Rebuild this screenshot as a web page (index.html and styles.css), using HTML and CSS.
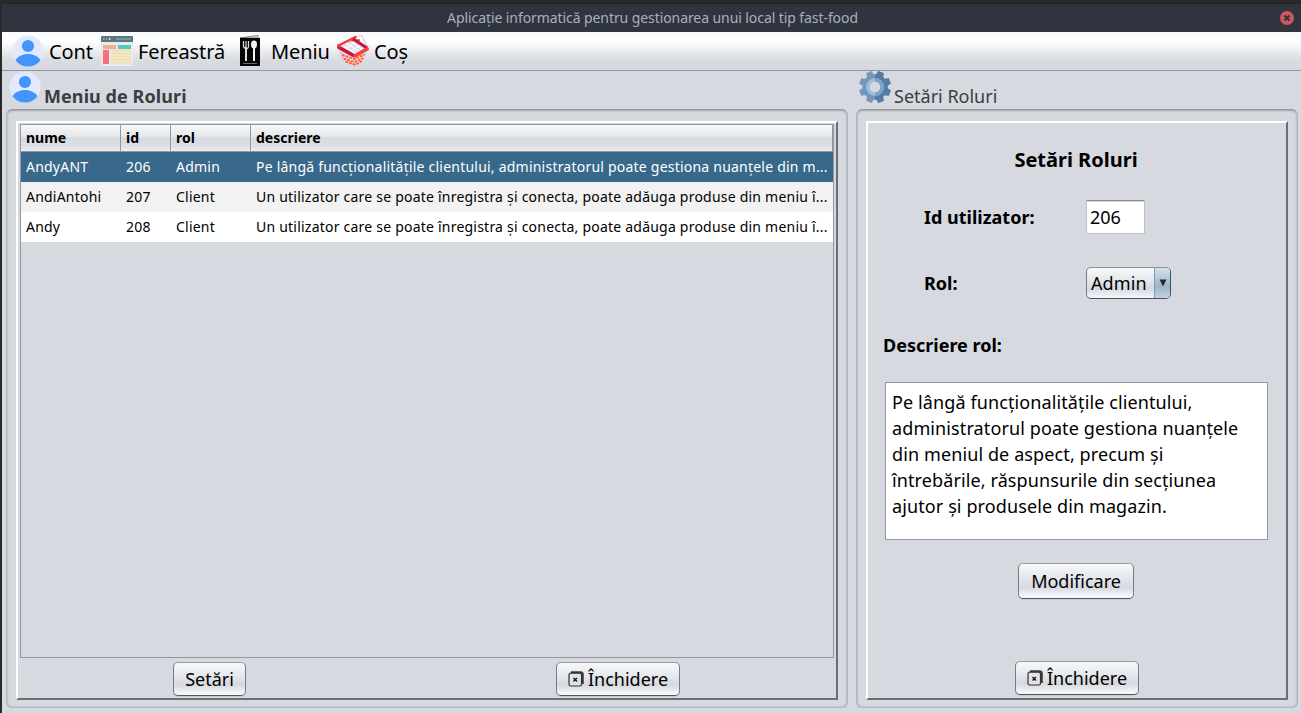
FILE: index.html
```html
<!DOCTYPE html>
<html lang="ro">
<head>
<meta charset="utf-8">
<title>Aplicație informatică pentru gestionarea unui local tip fast-food</title>
<link rel="stylesheet" href="styles.css">
</head>
<body>
<svg class="defs" width="0" height="0" aria-hidden="true">
  <symbol id="user" viewBox="0 0 32 32">
    <circle cx="16" cy="16" r="15.6" fill="#e3eaff"/>
    <circle cx="16" cy="11" r="6.1" fill="#4294ff"/>
    <path d="M3.5 25.2C6 21.300 10.500 19 16 19s10 2.300 12.500 6.200A15.600 15.600 0 0 1 16 31.600 15.600 15.600 0 0 1 3.500 25.200z" fill="#4294ff"/>
  </symbol>
  <symbol id="close" viewBox="0 0 16 16">
    <path d="M3 1.200h9.500q2.300 0 2.300 2.300v9.500" fill="none" stroke="#3c3c3f" stroke-width="2"/>
    <rect x="1" y="2.200" width="12.500" height="12.800" rx="1.800" fill="#e1e3e8" stroke="#303033" stroke-width="1.200"/>
    <path d="M5.500 7l3.500 3.500M9 7l-3.500 3.500" stroke="#111" stroke-width="1.300"/>
  </symbol>
</svg>
<div class="window">
  <header class="titlebar">
    <span class="title">Aplicație informatică pentru gestionarea unui local tip fast-food</span>
    <svg class="win-close" viewBox="0 0 14 14"><circle cx="7" cy="7" r="7" fill="#cc575d"/><path d="M4.500 4.500l5 5M9.500 4.500l-5 5" stroke="#2f343f" stroke-width="1.900"/></svg>
  </header>
  <nav class="menubar">
    <div class="item cont"><svg class="icon"><use href="#user"/></svg><span>Cont</span></div>
    <div class="item fereastra"><svg class="icon" viewBox="0 0 32 32">
      <rect y="1" width="32" height="30" rx="1" fill="#e9ebea"/><path d="M0 7V2q0-1 1-1h30q1 0 1 1v5z" fill="#5c7582"/>
      <path d="M2 3h1.500v2H2z" fill="#4fc9be"/><path d="M5 3h1.500v2H5z" fill="#f06f77"/><path d="M8 3h1.500v2H8z" fill="#f3d27b"/><path d="M15 3h15v2H15z" fill="#7f929c"/>
      <path d="M2 10h13v4H2z" fill="#eeb087"/><path d="M17 10h13v4H17z" fill="#4fcabe"/><path d="M2 15h6v14H2z" fill="#fa6e7c"/>
      <path d="M10 15.500h20M10 18.500h20M10 21.500h20M10 24.500h20M10 27.500h20" stroke="#f7dc95" stroke-width="1.300"/>
    </svg><span>Fereastră</span></div>
    <div class="item meniu"><svg class="icon" viewBox="0 0 32 32">
      <path d="M6 3l18-2.500V3z" fill="#eee" stroke="#333" stroke-width=".6"/><rect x="6" y="3" width="20" height="28" fill="#060606"/>
      <path d="M9.500 6v5q0 2 2.500 2.500t2.500-2.500V6M12 6v7" fill="none" stroke="#ddd" stroke-width="1.200"/><path d="M12 12v14" stroke="#ddd" stroke-width="2"/>
      <ellipse cx="20" cy="9.500" rx="3" ry="4" fill="#f4f4f4"/><path d="M20 12v14" stroke="#f4f4f4" stroke-width="2"/><path d="M9 28.500h14" stroke="#666"/>
    </svg><span>Meniu</span></div>
    <div class="item cos"><svg class="icon" viewBox="0 0 32 32">
      <path d="M1 13l3 12 13 6 10-5 4-12-13 8z" fill="#d5d9df"/>
      <path d="M5 19l13 4 10-4-1.500 6-8.500 5-10-3.500z" fill="#f6ddd8"/>
      <path d="M5 20l12.500 4 10-4.500M6.500 23.500l11 3.500 9-4M8.500 26.500l9.500 3.200 7-3.700" fill="none" stroke="#ff5a3c" stroke-width="1.900" stroke-dasharray="2.800 1"/>
      <path d="M2 12L19 2l11 11-13 8z" fill="#dde1e7"/>
      <path d="M9 8l14 9M13 6l13 9M6 11l13 8M8 14l13-9M12 17l13-8" stroke="#fafbfc" stroke-width="1.300"/>
      <path d="M21 1l4 0 6 12" fill="none" stroke="#c9cdd3" stroke-width="1.100"/>
      <path d="M0.500 11L19.500 1.500" stroke="#ee2f3c" stroke-width="2"/><path d="M11 5.500l12-.3" stroke="#ff4c42" stroke-width="1.800"/>
      <path d="M16 4l14 9" stroke="#c7103d" stroke-width="2.800"/>
      <path d="M0.500 11.500L17.500 21" stroke="#cc123e" stroke-width="3.500"/>
      <path d="M17 21.500L31.500 13" stroke="#fb403b" stroke-width="3.400"/>
      <path d="M0 10l4 2" stroke="#fb403b" stroke-width="2"/>
    </svg><span>Coș</span></div>
  </nav>
  <main class="content">
    <section class="group roles">
      <h2 class="caption strong"><svg class="icon"><use href="#user"/></svg><span>Meniu de Roluri</span></h2>
      <div class="frame"><div class="bevel list">
        <div class="table">
          <div class="row head"><span>nume</span><span>id</span><span>rol</span><span>descriere</span></div>
          <div class="row selected"><span>AndyANT</span><span>206</span><span>Admin</span><span>Pe lângă funcționalitățile clientului, administratorul poate gestiona nuanțele din m...</span></div>
          <div class="row odd"><span>AndiAntohi</span><span>207</span><span>Client</span><span>Un utilizator care se poate înregistra și conecta, poate adăuga produse din meniu î...</span></div>
          <div class="row"><span>Andy</span><span>208</span><span>Client</span><span>Un utilizator care se poate înregistra și conecta, poate adăuga produse din meniu î...</span></div>
        </div>
        <div class="actions">
          <button class="btn settings">Setări</button>
          <button class="btn close"><svg class="close-icon"><use href="#close"/></svg>Închidere</button>
        </div>
      </div></div>
    </section>
    <section class="group detail">
      <h2 class="caption"><svg class="icon gear" viewBox="-16 -16 32 32">
        <g id="teeth" fill="#7396bd"><circle r="12.700"/>
          <path id="tooth" d="M-3.800-11.500L-2.900-16h5.800l.9 4.500z" transform="rotate(22.500)"/><use href="#tooth" transform="rotate(45)"/><use href="#tooth" transform="rotate(90)"/><use href="#tooth" transform="rotate(135)"/><use href="#tooth" transform="rotate(180)"/><use href="#tooth" transform="rotate(225)"/><use href="#tooth" transform="rotate(270)"/><use href="#tooth" transform="rotate(315)"/></g>
        <clipPath id="right-half"><path d="M0-16h16v32H0z"/></clipPath>
        <g clip-path="url(#right-half)" fill="#577ba5"><circle r="12.700"/><path d="M-3.800-11.500L-2.900-16h5.800l.9 4.500z" transform="rotate(22.500)"/><path d="M-3.800-11.500L-2.900-16h5.800l.9 4.500z" transform="rotate(67.500)"/><path d="M-3.800-11.500L-2.900-16h5.800l.9 4.500z" transform="rotate(112.500)"/><path d="M-3.800-11.500L-2.900-16h5.800l.9 4.500z" transform="rotate(157.500)"/></g>
        <circle r="9" fill="#98bfdf"/><path d="M0-9a9 9 0 0 1 0 18z" fill="#7ba3ca"/><circle r="5.300" fill="#d6d9e0"/>
      </svg><span>Setări Roluri</span></h2>
      <div class="frame"><div class="bevel form">
        <h3 class="heading">Setări Roluri</h3>
        <div class="field id-field"><label>Id utilizator:</label><div class="input">206</div></div>
        <div class="field role-field"><label>Rol:</label><div class="combo"><span class="value">Admin</span><span class="arrow"><svg viewBox="0 0 8 8"><path d="M.5.500h7L4 7.500z" fill="#242a31"/></svg></span></div></div>
        <label class="desc-label">Descriere rol:</label>
        <div class="textarea">Pe lângă funcționalitățile clientului,<br>administratorul poate gestiona nuanțele<br>din meniul de aspect, precum și<br>întrebările, răspunsurile din secțiunea<br>ajutor și produsele din magazin.</div>
        <button class="btn modify">Modificare</button>
        <button class="btn close"><svg class="close-icon"><use href="#close"/></svg>Închidere</button>
      </div></div>
    </section>
  </main>
</div>
</body>
</html>
```
FILE: styles.css
```css
* { box-sizing: border-box; }
body {
  margin: 0;
  width: 1301px;
  height: 713px;
  overflow: hidden;
  padding: 3px 0 0 2px;
  background: #292929;
  font: 18px/26px "Noto Sans", sans-serif;
  color: #000;
}
.defs { position: absolute; }
.window { height: 710px; display: flex; flex-direction: column; background: #d6d9e0; }
.titlebar {
  height: 29px;
  display: flex;
  align-items: center;
  justify-content: center;
  background: #2f343f;
  border-top: 1px solid #202229;
  position: relative;
  color: #a9b0bd;
  font-size: 14px;
  letter-spacing: -.08px;
}
.title { padding-left: 2px; }
.win-close { position: absolute; right: 7px; top: 7px; width: 14px; height: 14px; }
.menubar {
  height: 39px;
  display: flex;
  border-bottom: 1px solid #9297a1;
  background: linear-gradient(#f8fafc 0, #fdfefe 25%, #d8dbe0 75%, #d6d9e0);
  font-size: 20px;
  letter-spacing: -.08px;
}
.item { display: flex; align-items: center; gap: 5px; }
.item span { padding-top: 2px; }
.icon { width: 32px; height: 32px; flex: none; }
.cont { width: 99px; padding-left: 10px; }
.fereastra { width: 131px; }
.meniu { width: 103px; gap: 5px; padding-left: 2px; }
.cos { padding-left: 2px; gap: 5px; }
.content { flex: 1; display: flex; gap: 8px; padding: 0 3px 5px 4px; }
.group { display: flex; flex-direction: column; }
.roles { width: 842px; }
.detail { width: 442px; }
.caption {
  height: 38px;
  margin: 0;
  padding-left: 3px;
  display: flex;
  gap: 3px;
  font-size: 18px;
  font-weight: 400;
  color: #3c3d40;
}
.caption span { padding-top: 12px; }
.strong { font-weight: 700; letter-spacing: .07px; }
.frame {
  flex: 1;
  padding: 11px 9px 7px;
  border: 1px solid #b1b4ba;
  border-top-color: #92959c;
  border-radius: 6px;
  box-shadow: inset 0 1px 2px #a6a9b0, inset 0 0 3px #b8bbc1;
}
.bevel {
  height: 100%;
  border: 2px solid;
  border-color: #fff #6b6e73 #6b6e73 #fff;
  display: flex;
  flex-direction: column;
}
.list { padding: 1px 2px 0; }
.table { height: 534px; border: 1px solid #9297a1; font-size: 14px; }
.row { display: grid; grid-template-columns: 100px 50px 80px 1fr; height: 30px; line-height: 30px; background: #fff; letter-spacing: .22px; }
.row span { padding-left: 5px; white-space: nowrap; }
.row.head {
  height: 27px;
  line-height: 26px;
  font-weight: 700;
  letter-spacing: 0;
  border-bottom: 1px solid #9297a1;
  background: linear-gradient(#f8f8fa, #e5e6ea 45%, #d6d9df 50%, #dcdfe5 80%, #eceef4);
}
.head span { border-right: 1px solid #9297a1; }
.row.selected { background: #39698a; color: #fff; }
.row.odd { background: #f2f2f2; }
.actions { display: flex; padding: 4px 0 0 153px; }
.btn {
  height: 34px;
  padding: 0;
  display: flex;
  align-items: center;
  justify-content: center;
  gap: 4px;
  font: inherit;
  color: #000;
  border: 1px solid #777b81;
  border-color: #989ba2 #777b81 #54575d;
  border-radius: 5px;
  background: linear-gradient(#f7f8fa, #e6e8ec 40%, #d5d8df 68%, #f5f6fb 95%);
  box-shadow: 0 1px #c6c9d0;
}
.settings { width: 73px; margin-right: 310px; }
.close { width: 124px; }
.close-icon { width: 16px; height: 16px; }
.form { padding: 24px 17px 0 15px; }
.heading { margin: 0; font-size: 20px; text-align: center; }
.field { display: flex; align-items: center; padding-left: 41px; }
.field label { width: 162px; }
label { font-weight: 700; }
.id-field { margin-top: 27px; }
.input {
  width: 59px;
  height: 34px;
  padding: 3px;
  background: #fff;
  border: 1px solid #c0c1c5;
  border-top: 1px solid #8d8e8f;
  box-shadow: inset 0 1px #d7d7d7;
}
.role-field { margin-top: 33px; }
.combo {
  display: flex;
  width: 85px;
  height: 32px;
  border: 1px solid #74777d;
  border-color: #8c9097 #34546c #4b535c #777b81;
  border-radius: 5px;
  overflow: hidden;
  background: linear-gradient(#f7f8fa, #e6e8ec 40%, #d5d8df 68%, #f5f6fb);
}
.value { width: 67px; padding: 2px 0 0 4px; letter-spacing: .1px; }
.arrow {
  flex: 1;
  display: flex;
  align-items: center;
  justify-content: center;
  border-left: 1px solid #819bb0;
  background: linear-gradient(#d5e0e9, #a9bdce 50%, #9db4c7 60%, #bdd2e3);
}
.arrow svg { width: 8px; height: 8px; }
.desc-label { margin-top: 33px; }
.textarea {
  width: 383px;
  height: 158px;
  margin: 24px 0 0 2px;
  padding: 6px;
  background: #fff;
  border: 1px solid #9297a1;
  letter-spacing: .11px;
}
.modify { width: 116px; height: 36px; margin: 23px 0 0 135px; }
.form .close { margin: 62px 0 0 132px; }
```
